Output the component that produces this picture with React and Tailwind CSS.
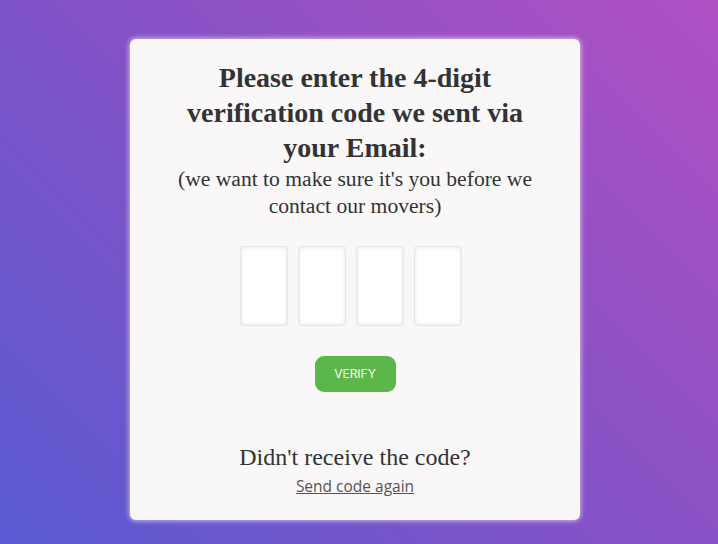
export default function App() {
  return (
    <div className="w-[718px] h-[544px] overflow-hidden bg-[linear-gradient(45deg,#5a5ad2_0%,#8452c6_50%,#b050c3_100%)] flex justify-start pl-[130px] pt-[39px]">
      <div className="w-[450px] h-[481px] bg-[#f9f7f8] rounded-[6px] shadow-[0_0_5px_1px_rgba(255,255,255,0.6)] flex flex-col items-center px-[40px] pt-[21px] text-[#333]">
        <h1 className="font-['Liberation_Serif',serif] font-bold text-[28px] leading-[35px] text-center">
          Please enter the 4-digit verification code we sent via your Email:
        </h1>
        <p className="mt-[1px] font-['Liberation_Serif',serif] text-[21.6px] leading-[27px] text-center">
          (we want to make sure it's you before we contact our movers)
        </p>
        <div className="flex gap-[10px] mt-[26px] mr-[8px]">
          {[0, 1, 2, 3].map((i) => (
            <input
              key={i}
              type="text"
              maxLength={1}
              className="w-[48px] h-[80px] bg-white rounded-[3px] border border-[#e6e6e6] shadow-[inset_0_0_4px_rgba(0,0,0,0.12)] outline-none text-center"
            />
          ))}
        </div>
        <button className="mt-[30px] w-[81px] h-[36px] rounded-[9px] bg-[#5bb749] text-white text-[12px] font-['Inter',sans-serif]">
          VERIFY
        </button>
        <p className="mt-[50px] font-['Liberation_Serif',serif] text-[24px] leading-[30px] text-center">
          Didn't receive the code?
        </p>
        <a href="#" className="mt-[3px] text-[15.5px] leading-[22px] text-[#555] underline font-['Open_Sans',sans-serif]">
          Send code again
        </a>
      </div>
    </div>
  );
}
